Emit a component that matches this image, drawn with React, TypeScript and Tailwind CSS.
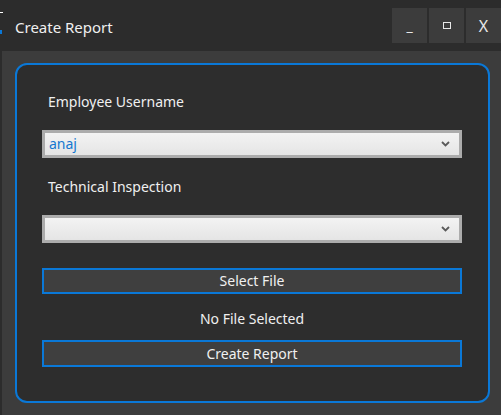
import React from "react";

function Chevron() {
  return (
    <svg width="9" height="6" viewBox="0 0 9 6" className="shrink-0">
      <polyline points="1,1 4.5,4.5 8,1" fill="none" stroke="#5a5a5a" strokeWidth="1.8" />
    </svg>
  );
}

function Select({ value }: { value?: string }) {
  return (
    <div className="h-[28px] border-[3px] border-[#acacac] bg-gradient-to-b from-[#f3f3f3] to-[#e5e5e5] flex items-center justify-between pl-[4px] pr-[9px]">
      <span className="text-[14px] leading-[18px] text-[#1578d0]">{value ?? ""}</span>
      <Chevron />
    </div>
  );
}

export default function App() {
  return (
    <div
      className="w-[501px] h-[415px] bg-[#2c2c2c] flex flex-col overflow-hidden text-white"
      style={{ fontFamily: '"Noto Sans", "Open Sans", sans-serif' }}
    >
      <div className="h-[51px] shrink-0 flex items-start relative">
        <div className="absolute left-0 top-[5px] w-[3px] h-[8px] border-b border-white" />
        <div className="absolute left-0 top-[30px] w-[2px] h-[4px] bg-[#0a78d7]" />
        <div className="pl-[15px] pt-[17px] text-[15px] leading-[20px] text-[#f0f0f0]">Create Report</div>
        <div className="ml-auto mt-[8px] flex gap-[2px]">
          <div className="w-[35px] h-[35px] bg-[#3c3c3c] flex items-center justify-center text-[14px] text-[#e8e8e8]">_</div>
          <div className="w-[35px] h-[35px] bg-[#3c3c3c] flex items-center justify-center">
            <div className="w-[8px] h-[7px] border border-[#e8e8e8]" />
          </div>
          <div className="w-[35px] h-[35px] bg-[#3c3c3c] flex items-center justify-center text-[16px] text-[#e8e8e8]">X</div>
        </div>
      </div>
      <div className="flex-1 ml-[2px] bg-[#3c3c3c] pl-[13px] pr-[11px] pt-[12px] pb-[12px] flex">
        <div className="flex-1 border-2 border-[#0a78d7] rounded-[12px] bg-[#2d2d2d] flex flex-col px-[25px] pr-[26px]">
          <div className="mt-[27px] pl-[6px] text-[14px] leading-[19px] text-[#f0f0f0]">Employee Username</div>
          <div className="mt-[19px]">
            <Select value="anaj" />
          </div>
          <div className="mt-[19px] pl-[6px] text-[14px] leading-[19px] text-[#f0f0f0]">Technical Inspection</div>
          <div className="mt-[19px]">
            <Select />
          </div>
          <button className="mt-[25px] h-[26px] border-2 border-[#0a78d7] bg-[#3f3f3f] text-[14px] leading-[18px] text-[#f0f0f0] flex items-center justify-center">
            Select File
          </button>
          <div className="mt-[15px] h-[19px] text-[14px] leading-[19px] text-center text-[#f0f0f0]">No File Selected</div>
          <button className="mt-[12px] h-[27px] border-2 border-[#0a78d7] bg-[#3f3f3f] text-[14px] leading-[18px] text-[#f0f0f0] flex items-center justify-center">
            Create Report
          </button>
        </div>
      </div>
    </div>
  );
}
